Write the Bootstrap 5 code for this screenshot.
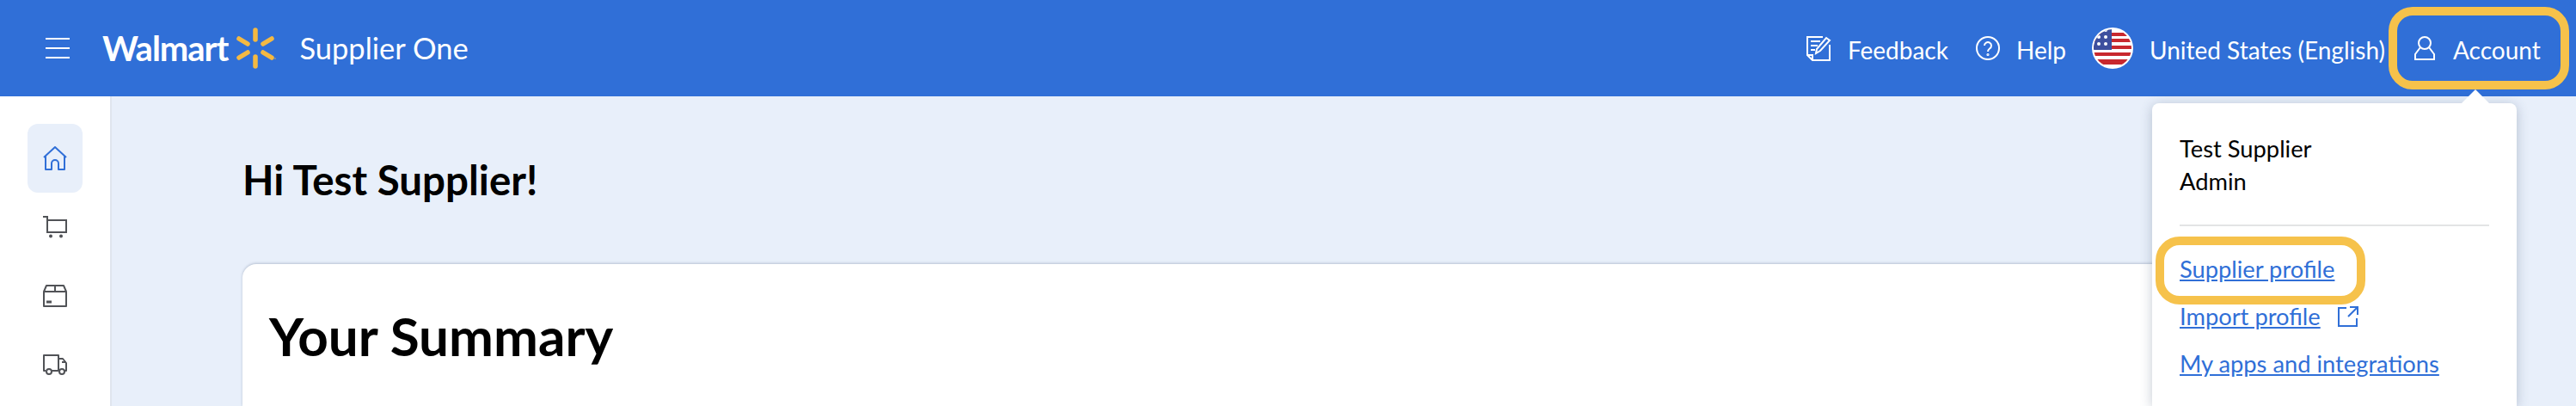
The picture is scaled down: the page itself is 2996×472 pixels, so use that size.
<!DOCTYPE html>
<html lang="en">
<head>
    <meta charset="UTF-8">
    <title>Supplier One</title>
    <link href="https://cdn.jsdelivr.net/npm/bootstrap@5.3.0/dist/css/bootstrap.min.css" rel="stylesheet">
    <style>
        html, body { height: 100%; overflow: hidden; }
        body { font-family: Lato, "Liberation Sans", sans-serif; background: #e8effa; color: #000; }
        .top-bar { height: 112px; background: #306fd7; color: #fff; padding-left: 53px; padding-right: 8px; }
        .menu-btn { width: 28px; }
        .menu-btn span { display: block; height: 2px; background: #fff; margin-bottom: 9px; }
        .menu-btn span:last-child { margin-bottom: 0; }
        .brand-name { margin-left: 38px; font-size: 40px; font-weight: 700; letter-spacing: -1px; line-height: 1; }
        .brand-spark { margin-left: 10px; width: 46px; height: 48px; }
        .brand-app { margin-left: 27px; font-size: 34.500px; line-height: 1; }
        .bar-link { font-size: 28px; color: #fff; text-decoration: none; line-height: 1; gap: 19px; }
        .bar-link svg { flex: none; }
        .bar-label { padding-top: 3px; }
        .bar-gap-feedback { margin-right: 32px; }
        .bar-gap-help { margin-right: 30px; }
        .bar-gap-small { margin-right: 4px; }
        .account-btn { width: 210px; height: 96px; border: 10px solid #f6c24b; border-radius: 28px; padding-left: 19px; gap: 20px; }
        .side-rail { width: 130px; background: #fff; border-right: 2px solid #dfe5ee; padding-top: 32px; }
        .rail-item { width: 64px; height: 80px; border-radius: 12px; }
        .rail-item.is-active { background: #e8effa; }
        .main-area { padding: 69px 282px 0 152px; }
        .hello-title { font-size: 47.500px; font-weight: 700; line-height: 56px; margin: 0 0 70px; }
        .summary-card { background: #fff; border-radius: 16px 16px 0 0; padding: 47px 31px; box-shadow: 0 -1px 3px rgba(70, 90, 120, .3); }
        .summary-title { font-size: 62px; font-weight: 700; line-height: 72px; margin: 0; }
        .account-menu { position: absolute; top: 120px; right: 69px; width: 424px; height: 352px; background: #fff; border-radius: 8px 8px 0 0; padding: 34px 32px 0; box-shadow: 0 2px 14px rgba(60, 80, 110, .3); font-size: 27.300px; }
        .account-menu::before { content: ""; position: absolute; top: -16px; right: 32px; border-left: 16px solid transparent; border-right: 16px solid transparent; border-bottom: 16px solid #fff; }
        .menu-who { line-height: 38px; padding-bottom: 31px; border-bottom: 2px solid #e3e4e5; }
        .menu-links a { color: #306fd7; line-height: 55px; }
        .menu-links { padding: 22px 0 22px; border-bottom: 2px solid #e3e4e5; }
        .import-row { gap: 20px; }
        .picked-link { position: relative; display: inline-block; }
        .picked-link::after { content: ""; position: absolute; top: -10px; left: -28px; right: -36px; bottom: -14px; border: 10px solid #f6c24b; border-radius: 28px; }
    </style>
</head>
<body class="d-flex flex-column">
    <header class="top-bar d-flex align-items-center flex-shrink-0">
        <div class="menu-btn"><span></span><span></span><span></span></div>
        <span class="brand-name">Walmart</span>
        <svg class="brand-spark" viewBox="0 0 46 48">
            <g stroke="#f4b942" stroke-width="5.500" stroke-linecap="round">
                <line x1="22" y1="3" x2="22" y2="14"/>
                <line x1="22" y1="34" x2="22" y2="45"/>
                <line x1="3" y1="13" x2="13" y2="19"/>
                <line x1="41" y1="13" x2="31" y2="19"/>
                <line x1="3" y1="35" x2="13" y2="29"/>
                <line x1="41" y1="35" x2="31" y2="29"/>
            </g>
            <circle cx="45" cy="36" r=".7" fill="#f4b942"/>
        </svg>
        <span class="brand-app">Supplier One</span>

        <div class="ms-auto d-flex align-items-center">
            <a class="bar-link d-flex align-items-center bar-gap-feedback" href="#">
                <svg width="30" height="30" viewBox="0 0 30 30" fill="none" stroke="#fff" stroke-width="2">
                    <path d="M20 2H2v21l6 6h20V11"/>
                    <path d="M2 23h6v6"/>
                    <path d="M6 7h11M6 12h8M6 17h5"/>
                    <path d="M12 21l1-5L24 3l4 3-11 12z"/>
                </svg>
                <span class="bar-label">Feedback</span>
            </a>
            <a class="bar-link d-flex align-items-center bar-gap-help" href="#">
                <svg width="28" height="28" viewBox="0 0 28 28" fill="none" stroke="#fff" stroke-width="2">
                    <circle cx="14" cy="14" r="13"/>
                    <path d="M10 11a4 4 0 1 1 6 3.500c-1.500 1-2 1.500-2 3.500"/>
                    <circle cx="14" cy="21.500" r=".6"/>
                </svg>
                <span class="bar-label">Help</span>
            </a>
            <a class="bar-link d-flex align-items-center bar-gap-small" href="#">
                <svg width="48" height="48" viewBox="0 0 48 48">
                    <defs><clipPath id="flagClip"><circle cx="24" cy="24" r="22"/></clipPath></defs>
                    <circle cx="24" cy="24" r="24" fill="#fff"/>
                    <g clip-path="url(#flagClip)">
                        <path fill="#c8282e" d="M0 6h48v4H0zM0 13h48v4H0zM0 21h48v4H0zM0 29h48v4H0zM0 37h48v6H0z"/>
                        <rect x="0" y="0" width="23" height="26" fill="#3d4f9e"/>
                        <g fill="#fff">
                            <circle cx="8" cy="11" r="2"/><circle cx="16" cy="11" r="2"/>
                            <circle cx="8" cy="19" r="2"/><circle cx="16" cy="19" r="2"/>
                            <circle cx="16" cy="3" r="2"/>
                        </g>
                    </g>
                </svg>
                <span class="bar-label">United States (English)</span>
            </a>
            <a class="bar-link account-btn d-flex align-items-center" href="#">
                <svg width="26" height="28" viewBox="0 0 26 28" fill="none" stroke="#fff" stroke-width="2">
                    <circle cx="13" cy="8" r="7"/>
                    <path d="M8 13L2 21v6h22v-6l-6-8"/>
                </svg>
                <span class="bar-label">Account</span>
            </a>
        </div>
    </header>

    <div class="d-flex flex-grow-1">
        <nav class="side-rail d-flex flex-column align-items-center flex-shrink-0">
            <a class="rail-item is-active d-flex align-items-center justify-content-center" href="#">
                <svg width="28" height="28" viewBox="0 0 28 28" fill="none" stroke="#306fd7" stroke-width="2" stroke-linejoin="round">
                    <path d="M1 13L14 1l13 12M3 11v16h7v-7a4 4 0 0 1 8 0v7h7V11"/>
                </svg>
            </a>
            <a class="rail-item d-flex align-items-center justify-content-center" href="#">
                <svg width="28" height="26" viewBox="0 0 28 26" fill="none" stroke="#515357" stroke-width="2">
                    <path d="M0 1h5v18h23M5 5h22v14"/>
                    <circle cx="9" cy="23.500" r="2" fill="#515357" stroke="none"/>
                    <circle cx="21" cy="23.500" r="2" fill="#515357" stroke="none"/>
                </svg>
            </a>
            <a class="rail-item d-flex align-items-center justify-content-center" href="#">
                <svg width="28" height="26" viewBox="0 0 28 26" fill="none" stroke="#515357" stroke-width="2" stroke-linejoin="round">
                    <path d="M1 8l3-7h20l3 7v17H1zM1 8h26M14 1v7"/>
                    <path d="M4 20h6" stroke-width="3"/>
                </svg>
            </a>
            <a class="rail-item d-flex align-items-center justify-content-center" href="#">
                <svg width="28" height="24" viewBox="0 0 28 24" fill="none" stroke="#515357" stroke-width="2" stroke-linejoin="round">
                    <path d="M3 19H1V1h17v18H10M18 5h5l4 5v9h-2M18 19h0M22 9h5"/>
                    <circle cx="7" cy="20" r="3"/>
                    <circle cx="22" cy="20" r="3"/>
                </svg>
            </a>
        </nav>
        <main class="main-area flex-grow-1 d-flex flex-column">
            <h1 class="hello-title">Hi Test Supplier!</h1>
            <section class="summary-card flex-grow-1">
                <h2 class="summary-title">Your Summary</h2>
            </section>
        </main>
    </div>

    <div class="account-menu">
        <div class="menu-who">Test Supplier<br>Admin</div>
        <div class="menu-links d-flex flex-column align-items-start">
            <a class="picked-link" href="#">Supplier profile</a>
            <span class="import-row d-flex align-items-center">
                <a href="#">Import profile</a>
                <svg width="24" height="24" viewBox="0 0 24 24" fill="none" stroke="#306fd7" stroke-width="2">
                    <path d="M10 2H1v21h21v-9M14 1h9v9M23 1L12 12"/>
                </svg>
            </span>
            <a href="#">My apps and integrations</a>
        </div>
    </div>
</body>
</html>
